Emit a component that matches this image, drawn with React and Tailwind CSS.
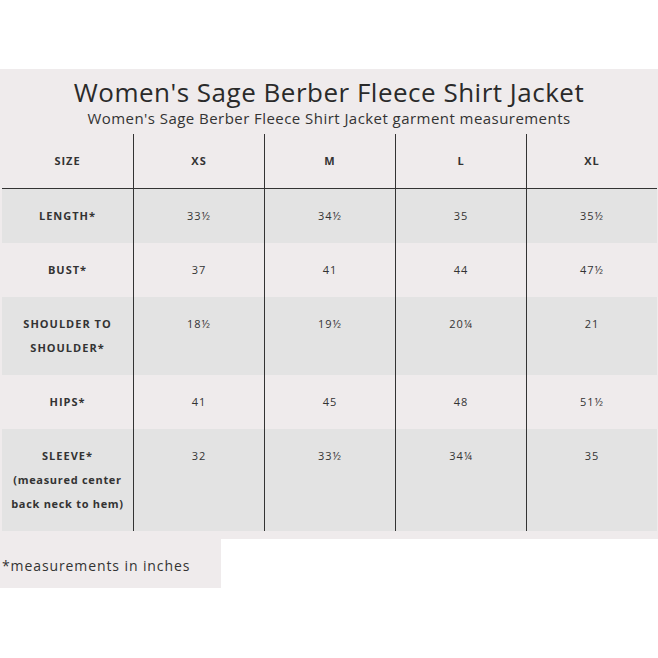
import React from "react";

const rows = [
  { label: ["LENGTH*"], vals: ["33½", "34½", "35", "35½"], gray: true },
  { label: ["BUST*"], vals: ["37", "41", "44", "47½"], gray: false },
  { label: ["SHOULDER TO", "SHOULDER*"], vals: ["18½", "19½", "20¼", "21"], gray: true },
  { label: ["HIPS*"], vals: ["41", "45", "48", "51½"], gray: false },
  {
    label: ["SLEEVE*", "(measured center", "back neck to hem)"],
    vals: ["32", "33½", "34¼", "35"],
    gray: true,
    sleeve: true,
  },
];

export default function App() {
  return (
    <div
      className="w-[658px] h-[658px] bg-white pt-[69px] text-[#333]"
      style={{ fontFamily: '"Open Sans", "Noto Sans", sans-serif' }}
    >
      <div className="bg-[#efebec] pb-[8px]">
        <div className="h-[65px] flex flex-col items-center">
          <div className="text-[26px] leading-[28px] mt-[9px] tracking-[0.5px] text-[#2a2a2a]">
            Women's Sage Berber Fleece Shirt Jacket
          </div>
          <div className="text-[15px] leading-[20px] mt-[2px] tracking-[0.45px]">
            Women's Sage Berber Fleece Shirt Jacket garment measurements
          </div>
        </div>
        <div className="ml-[2px] w-[655px]">
          <div className="grid grid-cols-[131px_131px_131px_131px_131px] border-b border-[#333]">
            {["SIZE", "XS", "M", "L", "XL"].map((h, i) => (
              <div
                key={h}
                className={`h-[54px] flex items-center justify-center text-[11px] font-bold tracking-[1px] ${
                  i > 0 ? "border-l border-[#333]" : ""
                }`}
              >
                {h}
              </div>
            ))}
          </div>
          {rows.map((r, ri) => (
            <div
              key={ri}
              className={`grid grid-cols-[131px_131px_131px_131px_131px] ${
                r.gray ? "bg-[#e3e3e3]" : ""
              }`}
            >
              <div className="py-[15px] text-center text-[11px] leading-[24px] font-bold tracking-[1px]">
                {r.label.map((l, li) => (
                  <div
                    key={li}
                    className={r.sleeve && li > 0 ? "tracking-[0.7px]" : ""}
                  >
                    {l}
                  </div>
                ))}
              </div>
              {r.vals.map((v, vi) => (
                <div
                  key={vi}
                  className="border-l border-[#333] py-[15px] text-center text-[11px] leading-[24px] tracking-[1px]"
                >
                  {v}
                </div>
              ))}
            </div>
          ))}
        </div>
      </div>
      <div className="w-[221px] h-[49px] bg-[#efebec] pt-[17px] pl-[2px] text-[14px] leading-[20px] tracking-[0.9px]">
        *measurements in inches
      </div>
    </div>
  );
}
